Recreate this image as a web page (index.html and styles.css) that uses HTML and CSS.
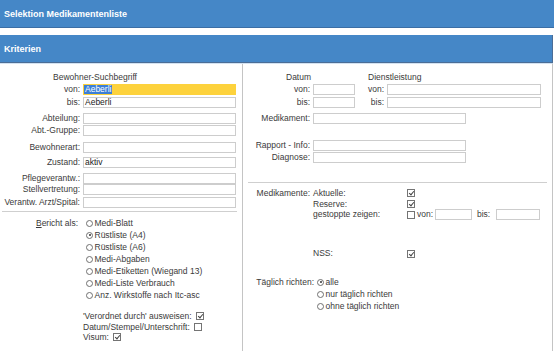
FILE: index.html
```html
<!DOCTYPE html>
<html lang="de">
<head>
<meta charset="utf-8">
<title>Selektion Medikamentenliste</title>
<link rel="stylesheet" href="styles.css">
</head>
<body>
<div class="titlebar">Selektion Medikamentenliste</div>
<div class="sectionbar">Kriterien</div>
<div class="panel">
  <div class="col-left">
    <div class="grp-title">Bewohner-Suchbegriff</div>
    <div class="frow mt1"><span class="flabel">von:</span><span class="field field-active"><span class="sel">Aeberli</span></span></div>
    <div class="frow mt2"><span class="flabel">bis:</span><span class="field">Aeberli</span></div>
    <div class="frow mt5"><span class="flabel">Abteilung:</span><span class="field"></span></div>
    <div class="frow mt1"><span class="flabel">Abt.-Gruppe:</span><span class="field"></span></div>
    <div class="frow mt6"><span class="flabel">Bewohnerart:</span><span class="field"></span></div>
    <div class="frow mt4"><span class="flabel">Zustand:</span><span class="field">aktiv</span></div>
    <div class="frow mt5"><span class="flabel">Pflegeverantw.:</span><span class="field"></span></div>
    <div class="frow"><span class="flabel">Stellvertretung:</span><span class="field"></span></div>
    <div class="frow mt2"><span class="flabel">Verantw. Arzt/Spital:</span><span class="field"></span></div>
    <div class="sep sep-left"></div>
    <div class="bericht">
      <div class="bericht-label"><u>B</u>ericht als:</div>
      <div class="options">
        <div class="opt"><span class="radio"></span>Medi-Blatt</div>
        <div class="opt"><span class="radio on"></span>Rüstliste (A4)</div>
        <div class="opt"><span class="radio"></span>Rüstliste (A6)</div>
        <div class="opt"><span class="radio"></span>Medi-Abgaben</div>
        <div class="opt"><span class="radio"></span>Medi-Etiketten (Wiegand 13)</div>
        <div class="opt"><span class="radio"></span>Medi-Liste Verbrauch</div>
        <div class="opt"><span class="radio"></span>Anz. Wirkstoffe nach Itc-asc</div>
      </div>
    </div>
    <div class="checks">
      <div class="chk">'Verordnet durch' ausweisen:<span class="cb on"></span></div>
      <div class="chk">Datum/Stempel/Unterschrift:<span class="cb"></span></div>
      <div class="chk">Visum:<span class="cb on"></span></div>
    </div>
  </div>
  <div class="col-right">
    <div class="rhead"><span class="rhead-datum">Datum</span><span>Dienstleistung</span></div>
    <div class="frow mt1"><span class="rlabel">von:</span><span class="field f-date"></span><span class="rlabel2">von:</span><span class="field f-dl"></span></div>
    <div class="frow mt2"><span class="rlabel">bis:</span><span class="field f-date"></span><span class="rlabel2">bis:</span><span class="field f-dl"></span></div>
    <div class="frow mt5"><span class="rlabel">Medikament:</span><span class="field f-mid"></span></div>
    <div class="frow mt16"><span class="rlabel">Rapport - Info:</span><span class="field f-mid"></span></div>
    <div class="frow mt1"><span class="rlabel">Diagnose:</span><span class="field f-mid"></span></div>
    <div class="sep sep-right"></div>
    <div class="mrow mt5"><span class="rlabel">Medikamente:</span><span class="mname">Aktuelle:</span><span class="cb on"></span></div>
    <div class="mrow"><span class="rlabel"></span><span class="mname">Reserve:</span><span class="cb on"></span></div>
    <div class="mrow mrow-tall"><span class="rlabel"></span><span class="mname">gestoppte zeigen:</span><span class="cb"></span><span class="mvon">von:</span><span class="field f-von"></span><span class="mbis">bis:</span><span class="field f-bis"></span></div>
    <div class="mrow mrow-tall mt28"><span class="rlabel"></span><span class="mname">NSS:</span><span class="cb on"></span></div>
    <div class="taeglich">
      <div class="t-label">Täglich richten:</div>
      <div class="t-options">
        <div class="opt"><span class="radio on"></span>alle</div>
        <div class="opt"><span class="radio"></span>nur täglich richten</div>
        <div class="opt"><span class="radio"></span>ohne täglich richten</div>
      </div>
    </div>
  </div>
</div>
</body>
</html>
```

FILE: styles.css
```css
* { box-sizing: border-box; }

html, body {
  margin: 0;
  padding: 0;
}

body {
  width: 554px;
  height: 351px;
  overflow: hidden;
  background: #fff;
  font-family: "Liberation Sans", Arial, sans-serif;
  font-size: 8.5px;
  color: #3a3a3a;
}

.titlebar {
  height: 28px;
  background: #4587c7;
  border-bottom: 1px solid #3b6ea5;
  color: #fff;
  font-weight: bold;
  font-size: 9px;
  padding-left: 4px;
  display: flex;
  align-items: center;
}

.sectionbar {
  margin-top: 7px;
  width: 553px;
  height: 28px;
  background: #4587c7;
  border-right: 1px solid #4b6d96;
  border-bottom: 1px solid #4b6d96;
  color: #fff;
  font-weight: bold;
  font-size: 9px;
  padding-left: 4px;
  display: flex;
  align-items: center;
}

.panel {
  display: flex;
  width: 553px;
  height: 300px;
  border-top: 1px solid #d3e2f1;
  border-right: 1px solid #c4c4c4;
}

.col-left {
  width: 243px;
  border-right: 1px solid #c4c4c4;
}

.col-right {
  flex: 1;
}

.grp-title,
.rhead {
  margin-top: 8px;
  height: 11px;
  line-height: 11px;
}

.grp-title { padding-left: 53px; }

.rhead { display: flex; }
.rhead-datum { margin-left: 43px; width: 82px; }

.frow {
  display: flex;
  align-items: center;
  height: 11px;
  line-height: 11px;
}

.mt1 { margin-top: 1px; }
.mt2 { margin-top: 2px; }
.mt4 { margin-top: 4px; }
.mt5 { margin-top: 5px; }
.mt6 { margin-top: 6px; }
.mt16 { margin-top: 16px; }
.mt28 { margin-top: 28px; }

.flabel {
  width: 80px;
  text-align: right;
  white-space: nowrap;
}

.field {
  display: block;
  height: 11px;
  margin-left: 3px;
  width: 153px;
  border: 1px solid #cdcdcd;
  background: #fff;
  color: #222;
  line-height: 9px;
  padding-left: 1px;
  white-space: nowrap;
  overflow: hidden;
}

.field-active {
  background: #fdd23c;
  border-color: #fdd23c;
  padding-left: 0;
}

.sel {
  display: inline-block;
  height: 9px;
  background: #3d7fd6;
  color: #fff;
  padding: 0 1px;
}

.sep {
  height: 1px;
  background: #cfcfcf;
}

.sep-left {
  margin: 3px 5px 0 2px;
}

.sep-right {
  margin: 19px 5px 0 5px;
}

.bericht {
  display: flex;
  margin-top: 5px;
}

.bericht-label {
  width: 78px;
  text-align: right;
  line-height: 12px;
  height: 12px;
}

.options {
  margin-left: 8px;
}

.opt {
  display: flex;
  align-items: center;
  height: 12px;
  line-height: 12px;
  white-space: nowrap;
}

.radio {
  position: relative;
  width: 7px;
  height: 7px;
  margin-right: 1.5px;
  border: 1px solid #707070;
  border-radius: 50%;
  background: #fff;
  flex: none;
}

.radio.on::after {
  content: "";
  position: absolute;
  left: 1.5px;
  top: 1.5px;
  width: 2px;
  height: 2px;
  border-radius: 50%;
  background: #333;
}

.checks {
  margin-top: 10px;
  padding-left: 83px;
}

.chk {
  display: flex;
  align-items: center;
  height: 10.5px;
  line-height: 10.5px;
  white-space: nowrap;
}

.chk .cb { margin-left: 4px; }

.cb {
  position: relative;
  width: 8px;
  height: 8px;
  border: 1px solid #747474;
  background: #fff;
  flex: none;
}

.cb.on::after {
  content: "";
  position: absolute;
  left: 2px;
  top: 0;
  width: 2px;
  height: 4px;
  border-right: 1px solid #444;
  border-bottom: 1px solid #444;
  transform: rotate(40deg);
}

.rlabel {
  width: 67px;
  text-align: right;
  white-space: nowrap;
  flex: none;
}

.rlabel2 {
  width: 29px;
  text-align: right;
  flex: none;
}

.f-date { width: 42px; }
.f-dl { width: 154px; }
.f-mid { width: 153px; }

.mrow {
  display: flex;
  align-items: center;
  height: 10.5px;
  line-height: 10.5px;
  white-space: nowrap;
}

.mrow-tall { height: 11px; }

.mname {
  margin-left: 3px;
  width: 94px;
}

.mvon { margin-left: 2px; width: 17px; }
.f-von { width: 37px; margin-left: 1px; }
.mbis { margin-left: 5px; width: 14px; }
.f-bis { width: 44px; margin-left: 5px; }

.taeglich {
  display: flex;
  margin-top: 17px;
}

.t-label {
  width: 71px;
  text-align: right;
  height: 12px;
  line-height: 12px;
  white-space: nowrap;
}

.t-options {
  margin-left: 3px;
}
```
